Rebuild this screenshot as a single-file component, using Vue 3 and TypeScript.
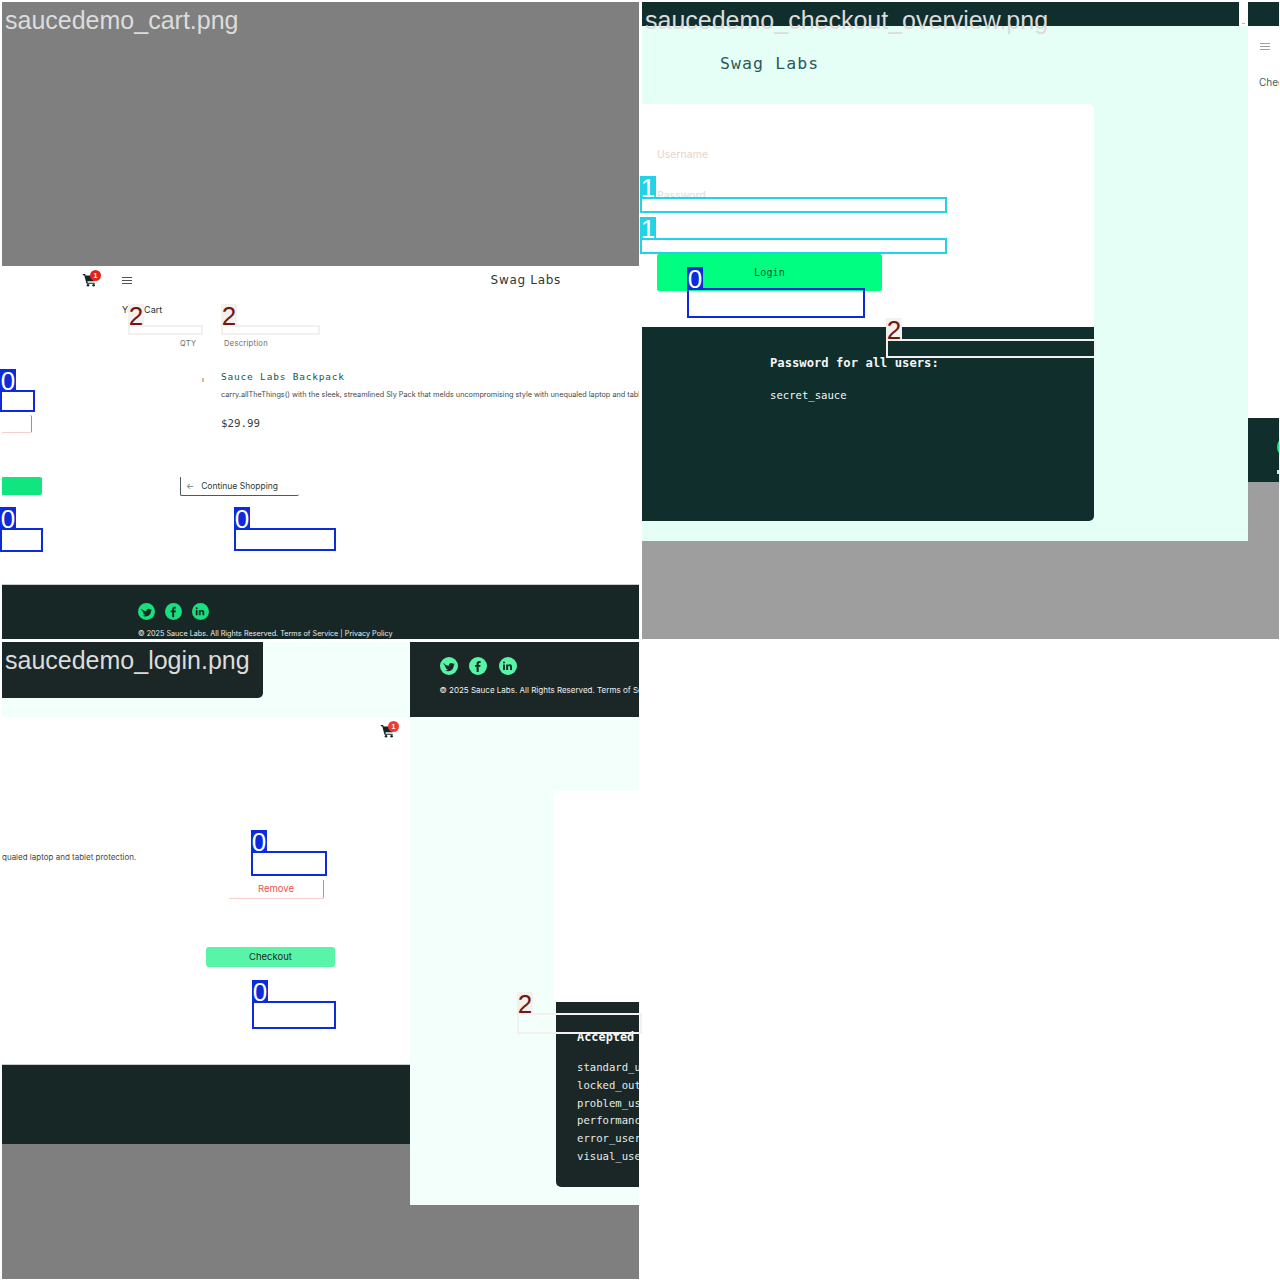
<script setup lang="ts">
interface Mark { x: number; y: number; w: number; h: number; n: number }
const marks: Mark[] = [
  { x: 0, y: 390, w: 35, h: 22, n: 0 },
  { x: 0, y: 528, w: 43, h: 24, n: 0 },
  { x: 234, y: 528, w: 102, h: 23, n: 0 },
  { x: 128, y: 325, w: 75, h: 10, n: 2 },
  { x: 221, y: 325, w: 99, h: 10, n: 2 },
  { x: 640, y: 197, w: 307, h: 16, n: 1 },
  { x: 640, y: 238, w: 307, h: 16, n: 1 },
  { x: 687, y: 288, w: 178, h: 30, n: 0 },
  { x: 886, y: 339, w: 210, h: 19, n: 2 },
  { x: 251, y: 851, w: 76, h: 25, n: 0 },
  { x: 252, y: 1001, w: 84, h: 28, n: 0 },
  { x: 517, y: 1013, w: 125, h: 21, n: 2 },
]
const boxStyle = (m: Mark) => ({ left: `${m.x}px`, top: `${m.y}px`, width: `${m.w}px`, height: `${m.h}px` })
const users = ['standard_user', 'locked_out_user', 'problem_user', 'performance_glitch_user', 'error_user', 'visual_user']
</script>

<template>
  <div class="montage">
    <!-- cart tile -->
    <section class="tile tile-cart">
      <div class="blank"></div>
      <main class="page">
        <header class="cart-head">
          <svg class="cart-ic" viewBox="0 0 20 18"><path d="M1 1h3l1 2h14l-2.4 7.5H7.2l.5 2H17v1.6H6L3 2.6H1z" /><circle cx="8" cy="16" r="1.7" /><circle cx="15.5" cy="16" r="1.7" /></svg>
          <i class="badge">1</i>
          <span class="burger"><b></b><b></b><b></b></span>
          <span class="swag">Swag Labs</span>
        </header>
        <h2 class="your-cart">Your Cart</h2>
        <div class="cols"><span class="qty">QTY</span><span>Description</span></div>
        <div class="item">
          <i class="dot"></i>
          <div class="item-body">
            <a class="item-name">Sauce Labs Backpack</a>
            <p class="item-desc">carry.allTheThings() with the sleek, streamlined Sly Pack that melds uncompromising style with unequaled laptop and tablet protection.</p>
            <p class="price">$29.99</p>
          </div>
        </div>
        <div class="remove-stub"></div>
        <div class="actions">
          <span class="checkout-stub"></span>
          <span class="continue"><em>←</em>Continue Shopping</span>
        </div>
      </main>
      <footer class="foot-a">
        <div class="socials">
          <svg viewBox="0 0 18 18"><circle cx="9" cy="9" r="9" /><path class="g" d="M3.5 6c1.5 1.700 3.200 2.600 5.400 2.700-.3-2.300 2.500-3.600 4.100-1.900l1.500-.5-.9 1.400 1.200-.2-1.100 1.200c0 3.800-3.700 7-8.900 4.700 1.200 0 2.300-.4 3-1-1.200-.1-2-.8-2.300-1.800h1.100c-1.300-.5-2-1.300-2-2.600l1 .3C3.500 7.600 3.100 7 3.500 6z" /></svg>
          <svg viewBox="0 0 18 18"><circle cx="9" cy="9" r="9" /><path class="g" d="M7.600 15V9.800H6V7.900h1.600V6.600c0-1.700 1-2.600 2.500-2.600h1.500v1.900h-1c-.7 0-.9.400-.9 1v1h1.900l-.3 1.900H9.700V15z" /></svg>
          <svg viewBox="0 0 18 18"><circle cx="9" cy="9" r="9" /><path class="g" d="M4 7.500h1.900V13H4zM4.950 4.500a1.050 1.050 0 1 1 0 2.100 1.050 1.050 0 0 1 0-2.100zM7.200 7.500H9v.8c.4-.6 1-.95 1.800-.95 1.500 0 2.200.95 2.200 2.600V13h-1.900v-2.700c0-.8-.3-1.300-1-1.300s-1 .5-1 1.300V13H7.200z" /></svg>
        </div>
        <p class="legal">© 2025 Sauce Labs. All Rights Reserved. Terms of Service | Privacy Policy</p>
      </footer>
    </section>

    <!-- login tile, dark green theme -->
    <section class="tile tile-over">
      <div class="over-left">
        <div class="over-strip"><div class="over-top"></div><i class="tick"></i></div>
        <div class="over-mint">
          <h1 class="brand">Swag Labs</h1>
          <div class="over-card">
            <form class="fields">
              <span class="ph user">Username</span>
              <span class="ph pass">Password</span>
              <span class="login">Login</span>
            </form>
          </div>
          <div class="over-dark">
            <h4>Password for all users:</h4>
            <p>secret_sauce</p>
          </div>
        </div>
      </div>
      <div class="over-right">
        <div class="over-top"></div>
        <div class="over-side">
          <span class="burger pale"><b></b><b></b><b></b></span>
          <span class="cha">Checkout</span>
        </div>
        <div class="side-foot"><i class="edge1"></i><i class="edge2"></i></div>
      </div>
    </section>

    <!-- wide cart tile, pale theme -->
    <section class="tile tile-login">
      <div class="login-left">
        <div class="login-top"><div class="login-dark"></div></div>
        <main class="page2">
          <div class="cart-right">
            <svg class="cart-ic" viewBox="0 0 20 18"><path d="M1 1h3l1 2h14l-2.4 7.5H7.2l.5 2H17v1.6H6L3 2.6H1z" /><circle cx="8" cy="16" r="1.700" /><circle cx="15.500" cy="16" r="1.700" /></svg>
            <i class="badge">1</i>
          </div>
          <p class="desc-tail">qualed laptop and tablet protection.</p>
          <span class="remove">Remove</span>
          <span class="checkout">Checkout</span>
        </main>
        <div class="foot-b"></div>
      </div>
      <div class="login-right">
        <footer class="foot-c">
          <div class="socials big">
            <svg viewBox="0 0 18 18"><circle cx="9" cy="9" r="9" /><path class="g2" d="M3.500 6c1.500 1.700 3.200 2.600 5.400 2.700-.3-2.300 2.500-3.600 4.100-1.900l1.500-.5-.9 1.400 1.200-.2-1.100 1.200c0 3.800-3.700 7-8.900 4.700 1.200 0 2.300-.4 3-1-1.200-.1-2-.8-2.300-1.800h1.100c-1.300-.5-2-1.300-2-2.600l1 .3C3.500 7.600 3.100 7 3.500 6z" /></svg>
            <svg viewBox="0 0 18 18"><circle cx="9" cy="9" r="9" /><path class="g2" d="M7.600 15V9.800H6V7.900h1.600V6.600c0-1.700 1-2.600 2.500-2.600h1.500v1.900h-1c-.7 0-.9.400-.9 1v1h1.900l-.3 1.900H9.700V15z" /></svg>
            <svg viewBox="0 0 18 18"><circle cx="9" cy="9" r="9" /><path class="g2" d="M4 7.500h1.900V13H4zM4.950 4.500a1.050 1.050 0 1 1 0 2.100 1.050 1.050 0 0 1 0-2.100zM7.200 7.500H9v.8c.4-.6 1-.95 1.800-.95 1.500 0 2.200.95 2.200 2.600V13h-1.900v-2.700c0-.8-.3-1.300-1-1.300s-1 .5-1 1.300V13H7.200z" /></svg>
          </div>
          <p class="legal wide">© 2025 Sauce Labs. All Rights Reserved. Terms of Service | Privacy Policy</p>
        </footer>
        <div class="login-mint">
          <div class="login-card"></div>
          <div class="login-panel">
            <h4>Accepted usernames are:</h4>
            <ul><li v-for="u in users" :key="u">{{ u }}</li></ul>
          </div>
        </div>
      </div>
    </section>

    <!-- annotations over the tiles -->
    <div
      v-for="(m, i) in marks"
      :key="i"
      class="mark"
      :class="`mark-${m.n}`"
      :style="boxStyle(m)"
    ><span>{{ m.n }}</span></div>
    <span class="file f1">saucedemo_cart.png</span>
    <span class="file f2">saucedemo_checkout_overview.png</span>
    <span class="file f3">saucedemo_login.png</span>
  </div>
</template>

<style>
html, body { margin: 0; background: #fff; }
</style>

<style scoped>
.montage {
  position: relative;
  display: grid;
  grid-template-columns: 637px 637px;
  grid-template-rows: 637px 637px;
  gap: 3px;
  padding: 2px;
  width: 1280px;
  height: 1280px;
  box-sizing: border-box;
  overflow: hidden;
  background: #fff;
  font-family: "Liberation Sans", sans-serif;
  color: #132322;
}
.tile { overflow: hidden; min-width: 0; }
p, h1, h2, h4, ul { margin: 0; padding: 0; }

/* cart tile */
.tile-cart { display: flex; flex-direction: column; background: #7f7f7f; }
.blank { height: 264px; flex: none; }
.page { height: 318px; flex: none; background: #fff; overflow: hidden; }
.cart-head {
  position: relative;
  display: flex;
  align-items: center;
  height: 28px;
  padding-left: 80px;
}
.cart-ic { width: 15px; height: 14px; fill: #132322; flex: none; }
.badge {
  position: absolute;
  left: 88px;
  top: 4px;
  width: 11px;
  height: 11px;
  border-radius: 50%;
  background: #e2231a;
  color: #fff;
  font: 700 7px/11px "Liberation Sans", sans-serif;
  text-align: center;
}
.burger { display: flex; flex-direction: column; gap: 2px; width: 10px; margin-left: 25px; }
.burger b { height: 1px; background: #4a5654; }
.swag {
  margin-left: auto;
  margin-right: 78px;
  font: 400 12px/1 "DejaVu Sans", sans-serif;
  letter-spacing: .7px;
  color: #2c3a39;
}
.your-cart {
  margin: 10px 0 0 120px;
  font: 400 9px/12px Inter, sans-serif;
  color: #253230;
}
.cols {
  display: flex;
  margin: 23px 0 0 178px;
  font: 400 7.500px/10px Inter, sans-serif;
  letter-spacing: .3px;
  color: #636d6b;
}
.qty { width: 44px; }
.item { display: flex; margin: 22px 0 0 200px; }
.dot { width: 2px; height: 4px; margin: 7px 17px 0 0; background: #d8b98a; flex: none; }
.item-body { flex: none; width: 640px; }
.item-name {
  display: block;
  font: 400 9.500px/12px "DejaVu Sans Mono", monospace;
  letter-spacing: .8px;
  color: #18583f;
}
.item-desc {
  margin-top: 7px;
  font: 400 7.300px/10px Inter, sans-serif;
  color: #3f4a49;
  white-space: nowrap;
}
.price {
  margin-top: 18px;
  font: 400 10.800px/12px "DejaVu Sans Mono", monospace;
  color: #333f3e;
}
.remove-stub {
  width: 29px;
  height: 17px;
  margin-top: -15px;
  border-right: 1px solid #e8706a;
  border-bottom: 1px solid #f8cfcc;
  border-radius: 0 2px 2px 0;
}
.actions { display: flex; margin-top: 44px; align-items: stretch; }
.checkout-stub { width: 40px; height: 18px; background: #10e57f; border-radius: 0 2px 2px 0; flex: none; }
.continue {
  display: flex;
  align-items: center;
  box-sizing: border-box;
  width: 119px;
  height: 19px;
  margin-left: 138px;
  padding-left: 5px;
  border-left: 1px solid #505b59;
  border-bottom: 1px solid #505b59;
  border-radius: 0 0 2px 2px;
  font: 400 8.500px/1 Inter, sans-serif;
  color: #2c3a39;
}
.continue em { font-style: normal; margin-right: 7px; color: #6b7674; }
.foot-a {
  flex: 1;
  background: #172726;
  border-top: 1px solid #c8cecd;
  box-sizing: border-box;
  padding: 18px 0 0 136px;
}
.socials { display: flex; gap: 10px; }
.socials svg { width: 17px; height: 17px; fill: #18e07e; }
.socials .g { fill: #172726; }
.legal {
  margin-top: 9px;
  font: 400 7.230px/9px Inter, sans-serif;
  color: #e8eeec;
  white-space: nowrap;
}

/* dark green tile */
.tile-over { display: flex; background: #9e9e9e; }
.over-left { width: 606px; flex: none; }
.over-strip { display: flex; height: 24px; background: #fff; position: relative; }
.over-top { height: 24px; background: #0f2e2c; }
.over-strip .over-top { width: 597px; flex: none; }
.tick { position: absolute; left: 600px; top: 21px; width: 3px; height: 1px; background: #b0b8b6; }
.over-mint { height: 515px; background: #e6fff6; }
.brand {
  height: 78px;
  box-sizing: border-box;
  padding: 28px 0 0 78px;
  font: 400 16.500px/20px "DejaVu Sans Mono", monospace;
  letter-spacing: 1.100px;
  color: #2a5a58;
}
.over-card {
  box-sizing: border-box;
  width: 452px;
  height: 223px;
  background: #fff;
  border-radius: 0 6px 0 0;
}
.fields { display: flex; flex-direction: column; align-items: flex-start; padding: 44px 0 0 15px; }
.ph { font: 400 10.500px/14px Inter, sans-serif; color: #dcdcd8; }
.user { color: #e8d2c6; }
.pass { margin-top: 27px; color: #d3e2dc; }
.login {
  display: block;
  width: 225px;
  height: 37px;
  margin-top: 51px;
  background: #00ff80;
  border-radius: 2px;
  font: 400 10px/37px "DejaVu Sans Mono", monospace;
  letter-spacing: .2px;
  text-align: center;
  color: #14532f;
}
.over-dark {
  box-sizing: border-box;
  width: 452px;
  height: 194px;
  padding: 28px 0 0 128px;
  background: #0f2e2c;
  border-radius: 0 0 5px 0;
  color: #f4f8f6;
}
.over-dark h4 { font: 700 12.200px/16px "DejaVu Sans Mono", monospace; }
.over-dark p { margin-top: 16px; font: 400 10.600px/16px "DejaVu Sans Mono", monospace; }
.over-right { flex: 1; min-width: 0; }
.over-side { height: 392px; background: #fff; padding: 17px 0 0 11px; box-sizing: border-box; display: flex; flex-direction: column; }
.burger.pale { margin-left: 1px; }
.burger.pale b { background: #98a3a1; }
.cha { margin-top: 25px; font: 400 10px/14px Inter, sans-serif; color: #4c5a60; white-space: nowrap; }
.side-foot { position: relative; height: 64px; background: #0f2e2c; overflow: hidden; }
.edge1 { position: absolute; left: 29px; top: 22px; width: 8px; height: 14px; background: #18e07e; border-radius: 50%; }
.edge2 { position: absolute; left: 29px; top: 52px; width: 4px; height: 4px; background: #d8e4e0; }

/* pale tile */
.tile-login { display: flex; background: #7f7f7f; }
.login-left { width: 408px; flex: none; }
.login-top { height: 75px; background: #f2fffb; }
.login-dark { width: 261px; height: 56px; background: #1a2726; border-radius: 0 0 5px 0; }
.page2 {
  display: flex;
  flex-direction: column;
  align-items: flex-start;
  height: 347px;
  background: #fff;
}
.cart-right { position: relative; align-self: flex-end; margin: 7px 12px 0 0; width: 18px; height: 15px; }
.cart-right .badge { left: 8px; top: -3px; background: #ef3b33; }
.desc-tail { margin-top: 113px; font: 400 8px/10px Inter, sans-serif; color: #3f4a49; white-space: nowrap; }
.remove {
  box-sizing: border-box;
  width: 95px;
  height: 19px;
  margin: 18px 0 0 227px;
  border-right: 1px solid #ec7d78;
  border-bottom: 1px solid #f8cfcc;
  border-radius: 0 0 2px 0;
  font: 400 9.500px/18px Inter, sans-serif;
  text-align: center;
  color: #e8574f;
}
.checkout {
  width: 129px;
  height: 20px;
  margin: 48px 0 0 204px;
  background: #58f5a8;
  border-radius: 3px;
  font: 400 9.500px/20px Inter, sans-serif;
  text-align: center;
  color: #1a2726;
}
.foot-b { height: 80px; background: #172726; border-top: 1px solid #c8cecd; box-sizing: border-box; }
.login-right { flex: 1; min-width: 0; }
.foot-c { height: 75px; box-sizing: border-box; background: #1a2726; padding: 15px 0 0 29.500px; overflow: hidden; }
.socials.big { gap: 11.500px; }
.socials.big svg { width: 18px; height: 18px; fill: #58f5a8; }
.socials .g2 { fill: #1a2726; }
.legal.wide { margin-top: 10px; font-size: 8px; line-height: 10px; color: #eef3f1; }
.login-mint { height: 488px; background: #f2fffb; padding: 74px 0 0 144px; box-sizing: border-box; }
.login-card { height: 211px; background: #fff; }
.login-panel {
  box-sizing: border-box;
  height: 185px;
  margin-left: 2px;
  padding: 27px 0 0 21px;
  background: #1a2726;
  border-radius: 0 0 0 5px;
  color: #e6ecea;
  overflow: hidden;
  white-space: nowrap;
}
.login-panel h4 { font: 700 11.900px/16px "DejaVu Sans Mono", monospace; color: #f4f8f6; }
.login-panel ul { margin-top: 14px; list-style: none; font: 400 10.600px/17.800px "DejaVu Sans Mono", monospace; }

/* overlays */
.mark { position: absolute; box-sizing: border-box; border: 2px solid; }
.mark span {
  position: absolute;
  left: -2px;
  bottom: 100%;
  width: 16px;
  height: 23px;
  text-align: center;
  font: 400 26px/24px "Liberation Sans", sans-serif;
}
.mark-0 { border-color: #0b2bdc; }
.mark-0 span { background: #0b2bdc; color: #fff; }
.mark-1 { border-color: #22d3e6; }
.mark-1 span { background: #22d3e6; color: #fff; }
.mark-2 { border-color: #f2f1ef; }
.mark-2 span { background: #f3f0ee; color: #6e1a12; }
.file {
  position: absolute;
  left: 5px;
  font: 400 25px/28px "Liberation Sans", sans-serif;
  color: #dcdcdc;
  white-space: nowrap;
}
.f1 { top: 6px; }
.f2 { top: 6px; left: 645px; }
.f3 { top: 646px; }
</style>
